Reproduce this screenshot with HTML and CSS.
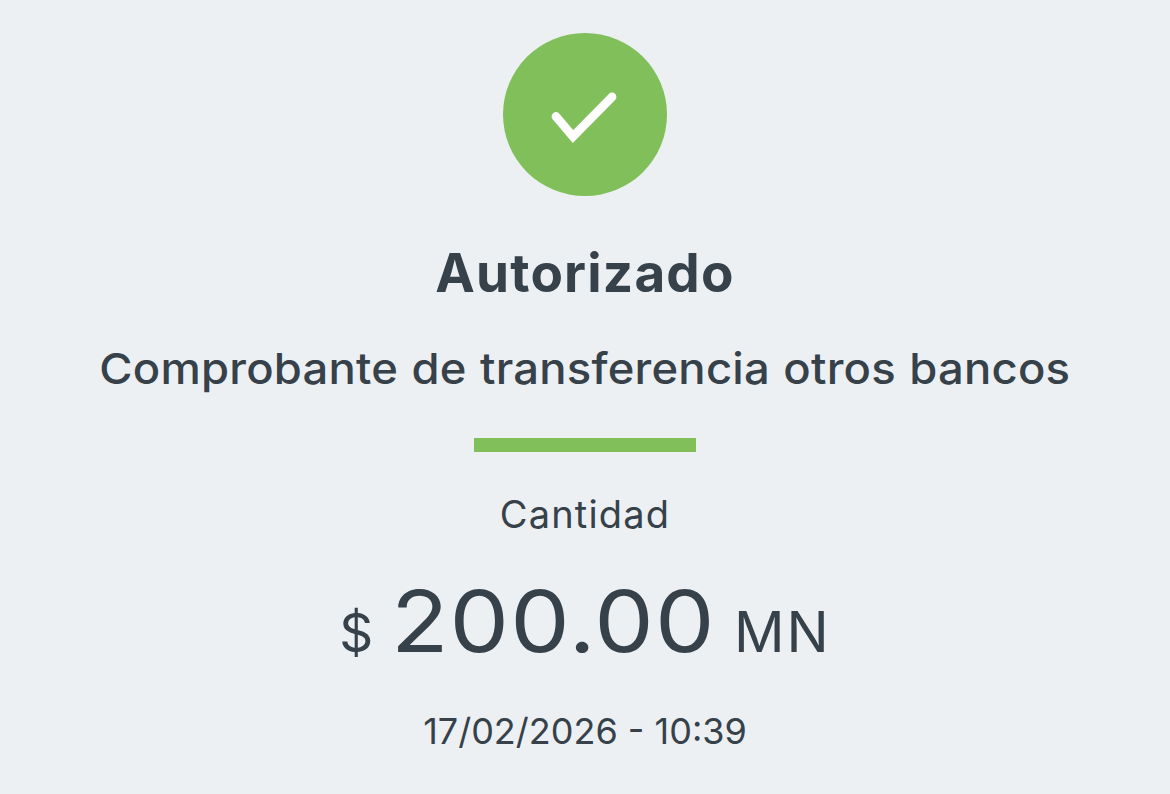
FILE: index.html
```html
<!DOCTYPE html>
<html lang="es">
<head>
  <meta charset="UTF-8">
  <title>Comprobante de transferencia</title>
  <link rel="stylesheet" href="styles.css">
</head>
<body>
  <main class="comprobante">
    <svg class="icono" viewBox="0 0 164 163">
      <ellipse cx="82" cy="81.500" rx="82" ry="81.500" fill="#81bf5b"/>
      <path d="M53 83.500L70 103.500L109 64" fill="none" stroke="#fff" stroke-width="8.800" stroke-linecap="round"/>
    </svg>
    <h1 class="estado">Autorizado</h1>
    <h2 class="titulo">Comprobante de transferencia otros bancos</h2>
    <div class="separador"></div>
    <p class="etiqueta">Cantidad</p>
    <p class="monto"><span class="signo">$</span><span class="valor">200.00</span><span class="moneda">MN</span></p>
    <p class="fecha">17/02/2026 - 10:39</p>
  </main>
</body>
</html>
```
FILE: styles.css
```css
body {
  margin: 0;
  background: #ecf0f3;
  color: #36414a;
  font-family: Inter, "Open Sans", sans-serif;
}
.comprobante {
  display: flex;
  flex-direction: column;
  align-items: center;
  box-sizing: border-box;
  height: 794px;
  padding-top: 33px;
  white-space: nowrap;
}
.comprobante > * {
  flex-shrink: 0;
}
.icono {
  width: 164px;
  height: 163px;
}
.estado {
  margin: 42px 0 0;
  font-size: 53px;
  line-height: 70px;
  font-weight: 700;
  letter-spacing: 1.2px;
}
.titulo {
  margin: 30px 0 0;
  font-size: 43px;
  line-height: 60px;
  font-weight: 500;
  letter-spacing: 0.2px;
  word-spacing: 1px;
  transform: scaleX(1.056);
}
.separador {
  width: 222px;
  height: 14px;
  margin-top: 40px;
  background: #81bf5b;
}
.etiqueta {
  margin: 37px 0 0;
  font-size: 38px;
  line-height: 50px;
  font-weight: 400;
  letter-spacing: 1.2px;
}
.monto {
  display: flex;
  align-items: baseline;
  margin: 33px 0 0;
  line-height: 100px;
  font-weight: 400;
}
.signo {
  font-size: 53px;
}
.valor {
  margin: 0 34px;
  font-size: 85px;
  letter-spacing: 1px;
  transform: scaleX(1.11);
}
.moneda {
  font-size: 56px;
  letter-spacing: 2px;
}
.fecha {
  margin: 23px 0 0;
  font-size: 36px;
  line-height: 50px;
  font-weight: 400;
}
```
